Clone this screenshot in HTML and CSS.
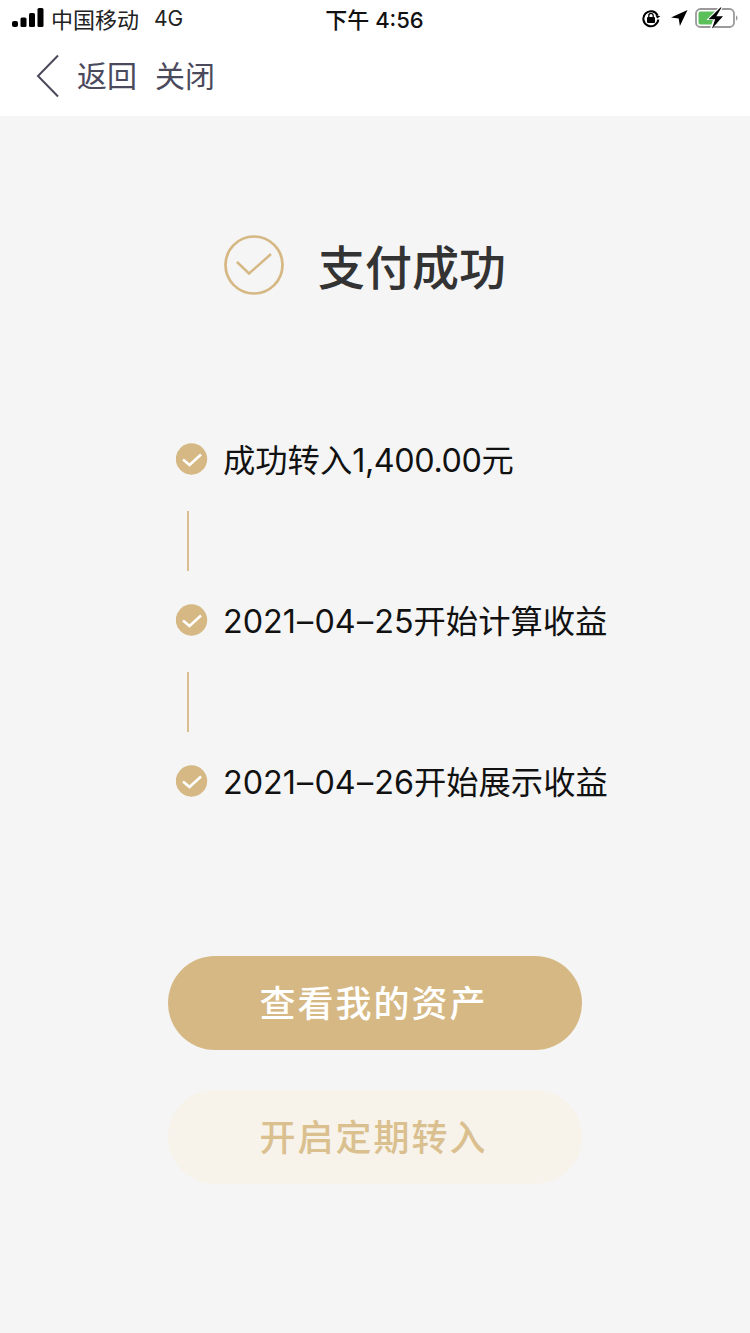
FILE: index.html
```html
<!DOCTYPE html>
<html lang="zh-CN">
<head>
<meta charset="utf-8">
<title>支付成功</title>
<link rel="stylesheet" href="styles.css">
</head>
<body>
<div class="page">
  <header class="top">
    <div class="status">
      <div class="status-left">
        <svg class="signal" width="32" height="20" viewBox="0 0 32 20"><rect x="0" y="13" width="6" height="6" rx="2"/><rect x="8.500" y="9.500" width="6" height="9.500" rx="1.500"/><rect x="17" y="5" width="6" height="14" rx="1.500"/><rect x="25.500" y="0" width="6" height="19" rx="1.500"/></svg>
        <span class="carrier">中国移动</span>
        <span class="network">4G</span>
      </div>
      <div class="clock">下午 4:56</div>
      <div class="status-right">
        <svg class="lock" width="20" height="20" viewBox="0 0 20 20"><path d="M16.600 7.500A7.500 7.500 0 1 0 17.300 11.500" fill="none" stroke="#000" stroke-width="2"/><path d="M14 7.500h5l-2.500 3z" fill="#000" transform="rotate(15 16.500 9)"/><rect x="6" y="9" width="8" height="6" rx="1"/><path d="M7.800 9V7.500a2.200 2.200 0 0 1 4.400 0V9" fill="none" stroke="#000" stroke-width="1.300"/></svg>
        <svg class="arrow" width="18" height="18" viewBox="0 0 18 18"><path d="M17.500 1 1 8.500l7.700 1 1.200 7.500z"/></svg>
        <svg class="battery" width="44" height="24" viewBox="0 0 44 24"><rect x="1" y="3" width="38" height="18" rx="4.500" fill="none" stroke="#9a9a9a" stroke-width="1.800"/><rect x="3.500" y="5.500" width="19" height="13" rx="2" fill="#5cc05a"/><path d="M41 9.500c2 .6 2 4.400 0 5z" fill="#9a9a9a"/><path d="M25 0 11.500 14h6.500L14.500 24 30 9.500h-6.500L28.500 0z" fill="#fff"/><path d="M25.500 1.500 13.500 13.200h6.700L17 22.500 28 10.300h-6.700L26.500 1.500z"/></svg>
      </div>
    </div>
    <nav class="nav">
      <svg class="back" width="24" height="44" viewBox="0 0 24 44"><path d="M22 1.500 2 22l20 20.500" fill="none" stroke="#4b4a5c" stroke-width="2"/></svg>
      <span class="nav-link">返回</span>
      <span class="nav-link">关闭</span>
    </nav>
  </header>

  <main class="content">
    <section class="result">
      <svg class="result-icon" width="60" height="60" viewBox="0 0 60 60"><circle cx="30" cy="30" r="28.500" fill="none" stroke="#d5b884" stroke-width="2.700"/><path d="M13 27l12 11.500L47 19" fill="none" stroke="#d5b884" stroke-width="2.500"/></svg>
      <h1 class="result-title">支付成功</h1>
    </section>

    <ol class="steps">
      <li class="step">
        <svg class="step-icon" width="32" height="32" viewBox="0 0 32 32"><circle cx="15.500" cy="16" r="15.700" fill="#d5b884"/><path d="M7 16.500l6.500 5.500L25 11.500" fill="none" stroke="#fff" stroke-width="2.600"/></svg>
        <span>成功转入<span class="amount">1,400.00</span>元</span>
      </li>
      <li class="line"></li>
      <li class="step">
        <svg class="step-icon" width="32" height="32" viewBox="0 0 32 32"><circle cx="15.500" cy="16" r="15.700" fill="#d5b884"/><path d="M7 16.500l6.500 5.500L25 11.500" fill="none" stroke="#fff" stroke-width="2.600"/></svg>
        <span>2021<span class="dash">–</span>04<span class="dash">–</span>25开始计算收益</span>
      </li>
      <li class="line"></li>
      <li class="step">
        <svg class="step-icon" width="32" height="32" viewBox="0 0 32 32"><circle cx="15.500" cy="16" r="15.700" fill="#d5b884"/><path d="M7 16.500l6.500 5.500L25 11.500" fill="none" stroke="#fff" stroke-width="2.600"/></svg>
        <span>2021<span class="dash">–</span>04<span class="dash">–</span>26开始展示收益</span>
      </li>
    </ol>

    <div class="actions">
      <button class="btn btn-primary" type="button">查看我的资产</button>
      <button class="btn btn-soft" type="button">开启定期转入</button>
    </div>
  </main>
</div>
</body>
</html>
```
FILE: styles.css
```css
* { box-sizing: border-box; }

html, body {
  margin: 0;
  padding: 0;
}

body {
  font-family: Inter, "Noto Sans CJK SC", sans-serif;
  background: #f5f5f5;
}

.page {
  width: 750px;
  height: 1333px;
  overflow: hidden;
  display: flex;
  flex-direction: column;
}

.top {
  height: 116px;
  background: #fff;
  flex: none;
}

.status {
  height: 38px;
  padding: 0 11px 2px 12px;
  display: grid;
  grid-template-columns: 1fr auto 1fr;
  align-items: center;
  color: #111;
}

.status-left {
  display: flex;
  align-items: center;
}

.signal { fill: #000; }

.carrier {
  font-size: 22px;
  margin-left: 7px;
  color: #222;
}

.network {
  font-size: 21px;
  margin-left: 15px;
  color: #222;
}

.clock {
  font-size: 22px;
  font-weight: 500;
  color: #111;
  margin-right: 2px;
}

.status-right {
  display: flex;
  align-items: center;
  justify-content: flex-end;
}

.lock { fill: #000; margin-right: 9px; }
.arrow { fill: #000; margin-right: 7px; }

.nav {
  display: flex;
  align-items: center;
  height: 76px;
  padding: 0 0 0 36px;
}

.back { margin-right: 17px; }

.nav-link {
  font-size: 30px;
  color: #4b4a5c;
  margin-right: 18px;
  padding-bottom: 4px;
}

.content {
  flex: 1;
  display: flex;
  flex-direction: column;
  align-items: center;
}

.result {
  display: flex;
  align-items: center;
  margin-top: 118px;
  margin-right: 20px;
  height: 62px;
}

.result-icon { margin-right: 34px; }

.result-title {
  margin: 0;
  font-size: 47px;
  font-weight: 500;
  color: #333;
  padding-bottom: 2px;
}

.steps {
  list-style: none;
  margin: 143px 0 0;
  padding: 0 0 0 176px;
  width: 100%;
}

.step {
  display: flex;
  align-items: center;
  height: 40px;
  font-size: 32.300px;
  color: #111;
}

.step > span {
  margin-top: -3px;
}

.amount {
  letter-spacing: -0.400px;
}

.dash {
  margin: 0 1.200px;
}

.step-icon {
  flex: none;
  margin-right: 15px;
}

.line {
  width: 2px;
  height: 60px;
  margin: 32px 0 29px 11px;
  background: #d9bf8f;
}

.actions {
  display: flex;
  flex-direction: column;
  align-items: center;
  gap: 40px;
  margin-top: 155px;
}

.btn {
  width: 414px;
  height: 94px;
  border: 0;
  border-radius: 47px;
  padding: 0 3px 5px 0;
  font-family: inherit;
  font-size: 36px;
  font-weight: 500;
  letter-spacing: 2px;
}

.btn-primary {
  background: #d5b884;
  color: #fff;
}

.btn-soft {
  background: #f7f2ea;
  color: #dac08f;
}
```
